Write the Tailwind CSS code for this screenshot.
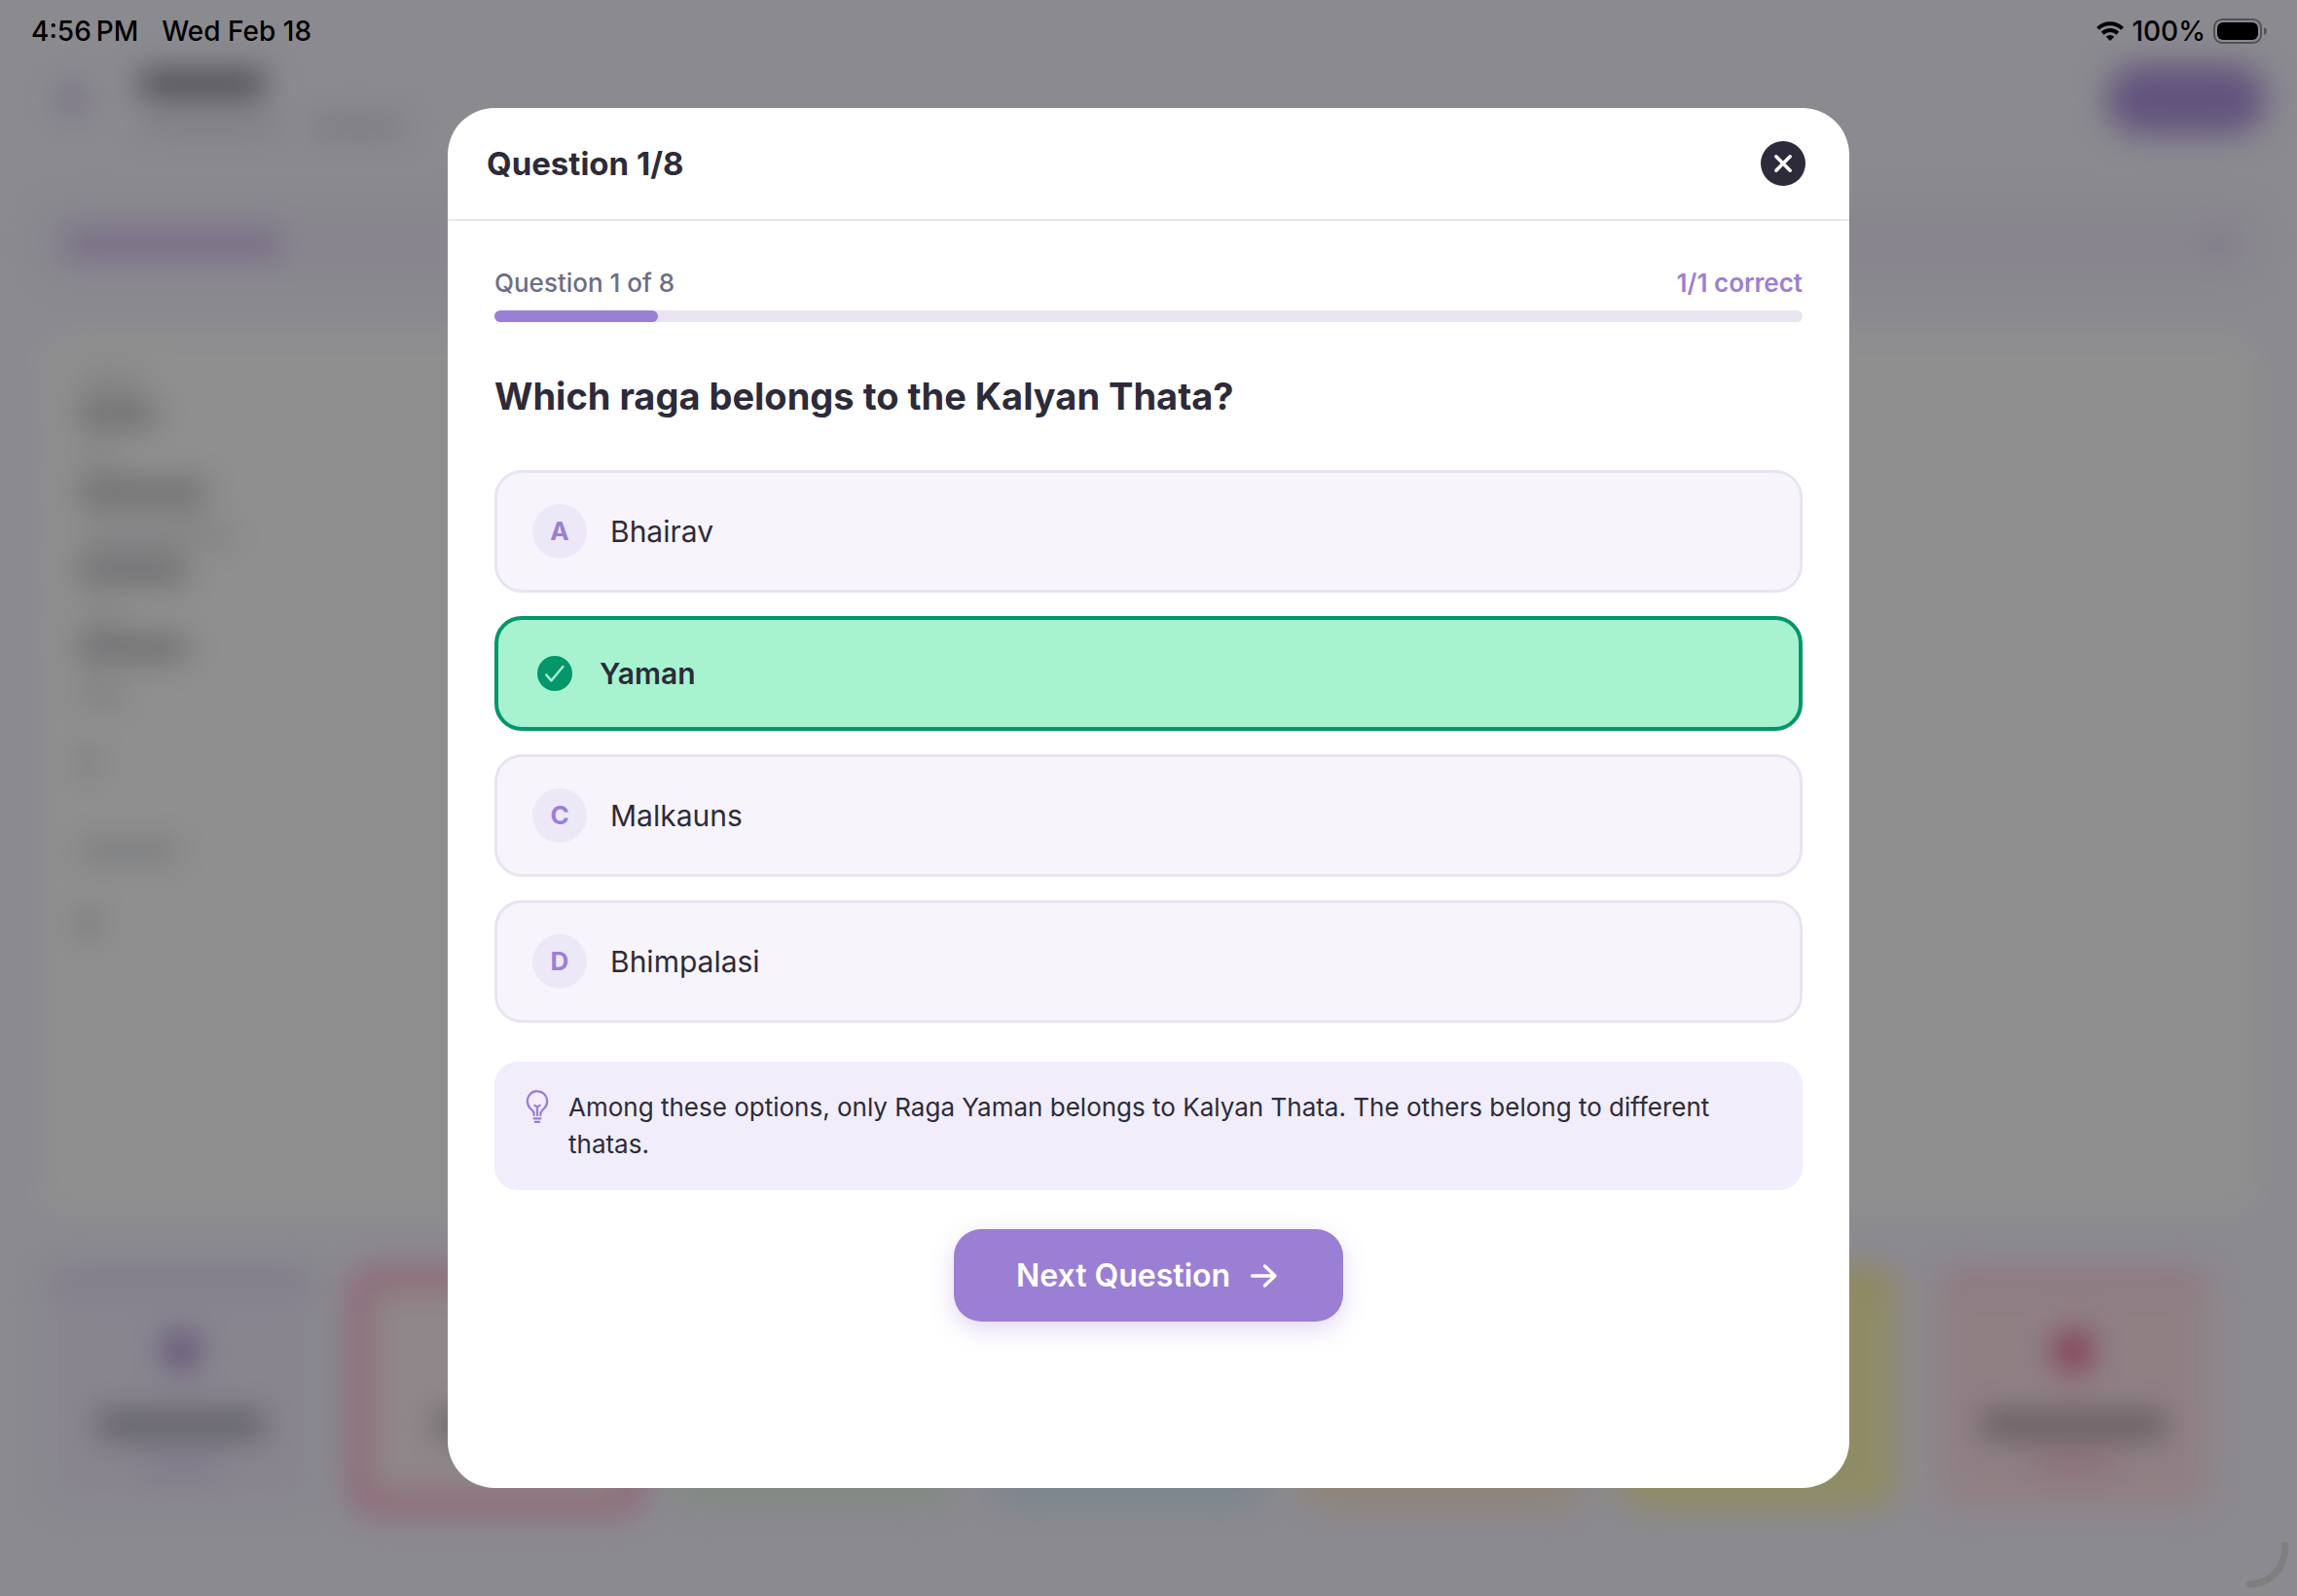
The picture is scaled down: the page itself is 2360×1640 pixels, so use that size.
<!DOCTYPE html>
<html lang="en">
<head>
    <meta charset="UTF-8">
    <meta name="viewport" content="width=device-width, initial-scale=1.0">
    <title>Raga Quiz</title>
    <script src="https://cdn.jsdelivr.net/npm/@tailwindcss/browser@4"></script>
</head>
<body class="relative min-h-screen overflow-hidden bg-[#f8f6ff] font-[Inter,sans-serif] text-[#2d2b3a]">

    <!-- Raga page behind the modal -->
    <div class="flex min-h-screen flex-col px-10 pt-[66px] pb-[86px] blur-[16px]" aria-hidden="true">
        <div class="flex items-center justify-between">
            <div class="flex items-center">
                <div class="ml-5 h-7 w-7 rounded-full bg-[#cbbbe9]"></div>
                <div class="ml-14 space-y-6 pt-2">
                    <div class="h-6 w-32 rounded bg-[#7b7985]"></div>
                    <div class="flex gap-8">
                        <div class="h-4 w-36 rounded bg-[#dddbe2]"></div>
                        <div class="h-4 w-24 rounded bg-[#d3d1da]"></div>
                    </div>
                </div>
            </div>
            <div class="-mr-2 h-[72px] w-[164px] rounded-full bg-[#af96df]"></div>
        </div>

        <div class="mt-[74px] flex h-[76px] items-center justify-between rounded-2xl bg-[#f3edfd] px-7">
            <div class="h-7 w-[220px] rounded bg-[#d3c3ee]"></div>
            <div class="h-6 w-6 rounded-full bg-[#dfd3f2]"></div>
        </div>

        <div class="mt-[58px] flex-1 rounded-3xl bg-white px-10 pt-9">
            <div class="h-4 w-16 rounded bg-[#e0e0e4]"></div>
            <div class="mt-4 h-6 w-20 rounded bg-[#bebec3]"></div>
            <div class="mt-6 h-4 w-10 rounded bg-[#e4e4e8]"></div>
            <div class="mt-4 h-6 w-[132px] rounded bg-[#bebec3]"></div>
            <div class="mt-6 h-4 w-40 rounded bg-[#dedee4]"></div>
            <div class="mt-4 h-6 w-28 rounded bg-[#bebec3]"></div>
            <div class="mt-7 h-4 w-12 rounded bg-[#e4e4e8]"></div>
            <div class="mt-3 h-6 w-28 rounded bg-[#bebec3]"></div>
            <div class="mt-7 h-4 w-12 rounded bg-[#d8d8de]"></div>
            <div class="mt-13 h-5 w-5 rounded bg-[#c8c8cc]"></div>
            <div class="mt-18 h-4 w-[104px] rounded bg-[#cecfd4]"></div>
            <div class="mt-14 h-5 w-5 rounded bg-[#babac0]"></div>
        </div>

        <div class="mt-14 flex gap-10 px-1">
            <div class="flex h-[246px] w-[284px] flex-col items-center rounded-3xl border-t-[20px] border-[#e2d8f6] bg-[#f3edff] pt-11">
                <div class="h-10 w-9 rounded-full bg-[#a890cf]"></div>
                <div class="mt-11 h-6 w-[172px] rounded bg-[#a3a0ac]"></div>
                <div class="mt-5 h-4 w-20 rounded bg-[#dcd0f2]"></div>
            </div>
            <div class="-mx-2 flex h-[250px] w-[300px] flex-col items-center rounded-3xl border-[16px] border-[#ff9fc4] bg-[#fff0f4] pt-12">
                <div class="mt-21 h-6 w-[120px] rounded bg-[#a3a0ac]"></div>
            </div>
            <div class="h-[246px] w-[284px] rounded-3xl bg-[#e6f5e9]"></div>
            <div class="h-[246px] w-[284px] rounded-3xl bg-[#ddeefd]"></div>
            <div class="h-[246px] w-[284px] rounded-3xl bg-[#fdecd8]"></div>
            <div class="h-[246px] w-[284px] rounded-3xl border-t-[20px] border-[#ffefa0] bg-[#fff9b4]"></div>
            <div class="flex h-[246px] w-[284px] flex-col items-center rounded-3xl border-t-[20px] border-[#ffd5e2] bg-[#ffe4ec] pt-11">
                <div class="h-10 w-10 rounded-full bg-[#e85a8c]"></div>
                <div class="mt-11 h-6 w-[190px] rounded bg-[#aa9aa4]"></div>
                <div class="mt-5 h-4 w-20 rounded bg-[#f6b8cd]"></div>
            </div>
        </div>
    </div>

    <!-- Status bar -->
    <div class="absolute inset-x-0 top-0 z-20 flex h-16 items-center justify-between pr-[30px] pl-8 text-[28px] leading-8 font-medium text-black">
        <div class="flex gap-6">
            <span>4:56&#8201;PM</span>
            <span>Wed Feb 18</span>
        </div>
        <div class="flex items-center gap-2">
            <svg class="h-5 w-7" viewBox="0 0 28 20" fill="none" stroke="#000" stroke-width="4">
                <path d="M1.4 7.4a18 18 0 0 1 25.2 0"/>
                <path d="M6.2 12.2a11.2 11.2 0 0 1 15.6 0"/>
                <path d="M14 20l-4.2-4.2a6 6 0 0 1 8.4 0z" fill="#000" stroke="none"/>
            </svg>
            <span>100%</span>
            <svg class="h-[26px] w-[56px]" viewBox="0 0 56 26">
                <rect x="1" y="1" width="48" height="24" rx="8" fill="none" stroke="#000" stroke-opacity=".4" stroke-width="2"/>
                <rect x="4" y="4" width="42" height="18" rx="6" fill="#000"/>
                <path d="M52 9c4 1.500 4 6.500 0 8z" fill="#000" fill-opacity=".4"/>
            </svg>
        </div>
    </div>

    <!-- Quiz modal -->
    <div class="absolute inset-0 z-10 flex items-center justify-center bg-black/44">
        <div class="w-full max-w-[1440px] rounded-[48px] bg-white" role="dialog" aria-labelledby="quizTitle">
            <div class="flex h-[116px] items-center justify-between border-b-2 border-[#e8e4f0] px-10">
                <h2 id="quizTitle" class="text-[33px] leading-[42px] font-bold">Question 1/8</h2>
                <button type="button" aria-label="Close" class="flex h-14 w-14 items-center justify-center">
                    <svg class="h-[46px] w-[46px]" viewBox="0 0 46 46">
                        <circle cx="23" cy="23" r="23" fill="#2d2b3a"/>
                        <path d="M15.800 15.800l14.400 14.400M30.200 15.800L15.800 30.200" stroke="#fff" stroke-width="3.500" stroke-linecap="round"/>
                    </svg>
                </button>
            </div>

            <div class="px-12 pt-12 pb-[171px]">
                <div class="flex justify-between text-[26px] leading-8 font-medium">
                    <span class="text-[#6e6d87]">Question 1 of 8</span>
                    <span class="font-semibold text-[#9b7fd4]">1/1 correct</span>
                </div>
                <div class="mt-3 h-3 rounded-full bg-[#e8e4f0]" role="progressbar" aria-label="Quiz progress" aria-valuemin="0" aria-valuemax="8" aria-valuenow="1">
                    <div class="h-3 rounded-full bg-[#9b7fd4]" style="width: 12.5%"></div>
                </div>

                <h3 class="mt-12 text-[38px] leading-14 font-bold">Which raga belongs to the Kalyan Thata?</h3>

                <div class="mt-12 flex flex-col gap-6 text-[30px] leading-[46px]">
                    <button type="button" class="flex items-center gap-6 rounded-[28px] border-3 border-[#e8e4f0] bg-[#f7f4fc] px-9 py-8 text-left">
                        <span class="flex h-14 w-14 items-center justify-center rounded-full bg-[#ede8f7] text-[26px] font-bold text-[#9b7fd4]">A</span>
                        <span>Bhairav</span>
                    </button>
                    <button type="button" class="flex items-center gap-6 rounded-[28px] border-4 border-[#059669] bg-[#a7f3d0] px-9 py-8 text-left font-semibold">
                        <svg class="h-11 w-11" viewBox="0 0 44 44" fill="none">
                            <circle cx="22" cy="22" r="18" fill="#059669"/>
                            <path d="M13.200 23.400l5.200 6L30.400 15" stroke="#a7f3d0" stroke-width="2.400" stroke-linecap="round" stroke-linejoin="round"/>
                        </svg>
                        <span>Yaman</span>
                    </button>
                    <button type="button" class="flex items-center gap-6 rounded-[28px] border-3 border-[#e8e4f0] bg-[#f7f4fc] px-9 py-8 text-left">
                        <span class="flex h-14 w-14 items-center justify-center rounded-full bg-[#ede8f7] text-[26px] font-bold text-[#9b7fd4]">C</span>
                        <span>Malkauns</span>
                    </button>
                    <button type="button" class="flex items-center gap-6 rounded-[28px] border-3 border-[#e8e4f0] bg-[#f7f4fc] px-9 py-8 text-left">
                        <span class="flex h-14 w-14 items-center justify-center rounded-full bg-[#ede8f7] text-[26px] font-bold text-[#9b7fd4]">D</span>
                        <span>Bhimpalasi</span>
                    </button>
                </div>

                <div class="mt-10 flex gap-[14px] rounded-3xl bg-[#f1edfb] px-[26px] py-7">
                    <svg class="h-9 w-9 shrink-0" viewBox="0 0 512 512" fill="none" stroke="#9b7fd4" stroke-width="32" stroke-linecap="round" stroke-linejoin="round">
                        <path d="M304 384v-24c0-29 31.540-56.430 52-76 28.840-27.570 44-64.610 44-108 0-80-63.730-144-144-144a143.600 143.600 0 0 0-144 144c0 41.840 15.810 81.390 44 108 20.350 19.210 52 46.700 52 76v24M224 480h64M208 432h96M256 384V256"/>
                        <path d="M294 240s-21.510 16-38 16-38-16-38-16"/>
                    </svg>
                    <p class="text-[26px] leading-[38px]">Among these options, only Raga Yaman belongs to Kalyan Thata. The others belong to different thatas.</p>
                </div>

                <div class="mt-10 flex justify-center">
                    <button type="button" class="flex items-center gap-4 rounded-[28px] bg-[#9b7fd4] px-16 py-7 text-[32px] leading-[39px] font-semibold text-white shadow-[0_8px_24px_rgba(155,127,212,0.3)]">
                        Next Question
                        <svg class="h-9 w-9" viewBox="0 0 36 36" fill="none" stroke="currentColor" stroke-width="3.400" stroke-linecap="round" stroke-linejoin="round">
                            <path d="M6.500 18h23M19.500 8l10.500 10-10.500 10"/>
                        </svg>
                    </button>
                </div>
            </div>
        </div>
    </div>

    <!-- Window resize handle -->
    <svg class="absolute right-2 bottom-2 z-20 h-12 w-12" viewBox="0 0 48 48" fill="none" stroke="#7f7f7d" stroke-width="7" stroke-linecap="round">
        <path d="M44 4C44 28 28 44 7 44"/>
    </svg>
</body>
</html>
